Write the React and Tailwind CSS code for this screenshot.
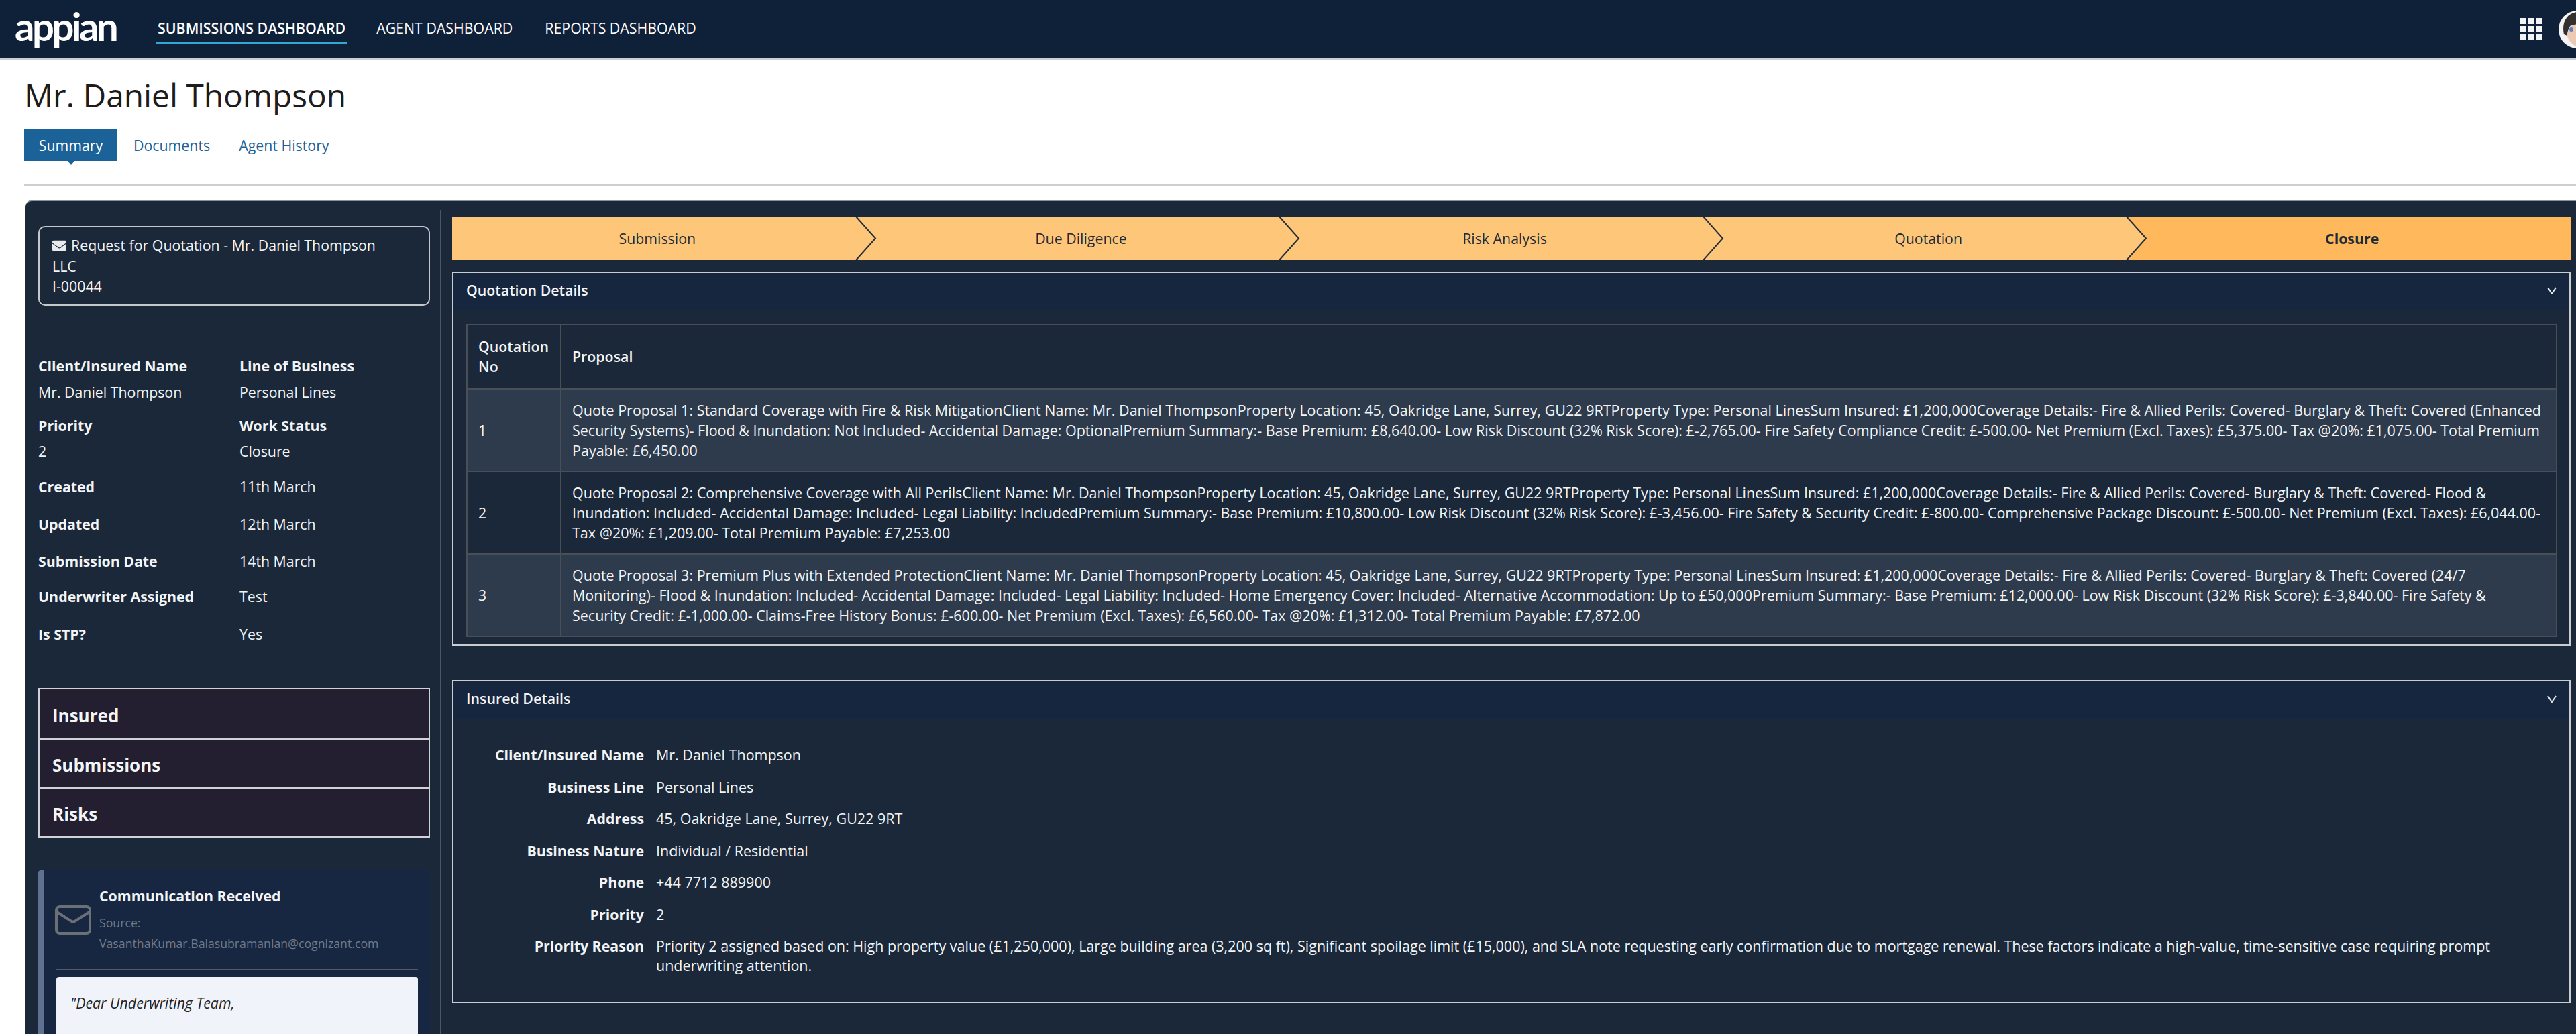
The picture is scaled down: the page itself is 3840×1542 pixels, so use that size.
import { Mail } from "lucide-react";
import { FaEnvelope } from "react-icons/fa";

const proposals = [
  "Quote Proposal 1: Standard Coverage with Fire & Risk MitigationClient Name: Mr. Daniel ThompsonProperty Location: 45, Oakridge Lane, Surrey, GU22 9RTProperty Type: Personal LinesSum Insured: £1,200,000Coverage Details:- Fire & Allied Perils: Covered- Burglary & Theft: Covered (Enhanced Security Systems)- Flood & Inundation: Not Included- Accidental Damage: OptionalPremium Summary:- Base Premium: £8,640.00- Low Risk Discount (32% Risk Score): £-2,765.00- Fire Safety Compliance Credit: £-500.00- Net Premium (Excl. Taxes): £5,375.00- Tax @20%: £1,075.00- Total Premium Payable: £6,450.00",
  "Quote Proposal 2: Comprehensive Coverage with All PerilsClient Name: Mr. Daniel ThompsonProperty Location: 45, Oakridge Lane, Surrey, GU22 9RTProperty Type: Personal LinesSum Insured: £1,200,000Coverage Details:- Fire & Allied Perils: Covered- Burglary & Theft: Covered- Flood & Inundation: Included- Accidental Damage: Included- Legal Liability: IncludedPremium Summary:- Base Premium: £10,800.00- Low Risk Discount (32% Risk Score): £-3,456.00- Fire Safety & Security Credit: £-800.00- Comprehensive Package Discount: £-500.00- Net Premium (Excl. Taxes): £6,044.00- Tax @20%: £1,209.00- Total Premium Payable: £7,253.00",
  "Quote Proposal 3: Premium Plus with Extended ProtectionClient Name: Mr. Daniel ThompsonProperty Location: 45, Oakridge Lane, Surrey, GU22 9RTProperty Type: Personal LinesSum Insured: £1,200,000Coverage Details:- Fire & Allied Perils: Covered- Burglary & Theft: Covered (24/7 Monitoring)- Flood & Inundation: Included- Accidental Damage: Included- Legal Liability: Included- Home Emergency Cover: Included- Alternative Accommodation: Up to £50,000Premium Summary:- Base Premium: £12,000.00- Low Risk Discount (32% Risk Score): £-3,840.00- Fire Safety & Security Credit: £-1,000.00- Claims-Free History Bonus: £-600.00- Net Premium (Excl. Taxes): £6,560.00- Tax @20%: £1,312.00- Total Premium Payable: £7,872.00",
];

const steps = ["Submission", "Due Diligence", "Risk Analysis", "Quotation", "Closure"];

const summaryRows = [
  ["Created", "11th March", "h-[56px]"],
  ["Updated", "12th March", "h-[55px]"],
  ["Submission Date", "14th March", "h-[53px]"],
  ["Underwriter Assigned", "Test", "h-[56px]"],
  ["Is STP?", "Yes", "h-[55px]"],
];

const insuredRows = [
  ["Client/Insured Name", "Mr. Daniel Thompson"],
  ["Business Line", "Personal Lines"],
  ["Address", "45, Oakridge Lane, Surrey, GU22 9RT"],
  ["Business Nature", "Individual / Residential"],
  ["Phone", "+44 7712 889900"],
  ["Priority", "2"],
  [
    "Priority Reason",
    "Priority 2 assigned based on: High property value (£1,250,000), Large building area (3,200 sq ft), Significant spoilage limit (£15,000), and SLA note requesting early confirmation due to mortgage renewal. These factors indicate a high-value, time-sensitive case requiring prompt underwriting attention.",
  ],
];

function PanelHeader({ title }) {
  return (
    <div className="h-[56px] px-[19px] pb-[4px] bg-[#17263f] flex items-center justify-between">
      <span className="text-[21.33px] font-semibold text-[#f2f4f6]">{title}</span>
      <svg width="14" height="11" viewBox="0 0 14 11" fill="none" stroke="#e6e9ee" strokeWidth="2">
        <path d="M1 1 L7 10 L13 1" />
      </svg>
    </div>
  );
}

function Avatar() {
  return (
    <svg width="58" height="58" viewBox="0 0 58 58" className="shrink-0 -mr-[31px]">
      <circle cx="29" cy="29" r="28" fill="#f4f4f4" />
      <path d="M9 36 C5 18 14 4 29 3 L58 3 L58 20 L24 22 C18 22 15 26 14 38 Z" fill="#33302f" />
      <path d="M14 38 C15 26 18 22 24 22 L58 20 L58 56 L32 56 C22 52 15 46 14 38 Z" fill="#ecc9b2" />
      <circle cx="20" cy="29" r="3" fill="#5b84c0" />
    </svg>
  );
}

export default function App() {
  return (
    <div className="w-[3840px] h-[1542px] overflow-hidden bg-white font-['Open_Sans',sans-serif]">
      {/* TOP NAV */}
      <header className="h-[89px] bg-[#0f2039] border-b-2 border-[#c9ced6] flex items-center justify-between pl-[22px]">
        <div className="flex items-center self-start">
          <span className="w-[150px] text-[58px] leading-none mt-[10px] font-bold tracking-[-3.5px] text-white font-['Lato',sans-serif]">
            appian
          </span>
          <nav className="ml-[61px] flex items-start text-[21.33px] text-white">
            <span className="h-[64px] px-[2px] pt-[24px] font-semibold border-b-[4px] border-[#35a7d4]">SUBMISSIONS DASHBOARD</span>
            <span className="ml-[44px] h-[64px] pt-[24px]">AGENT DASHBOARD</span>
            <span className="ml-[48px] h-[64px] pt-[24px]">REPORTS DASHBOARD</span>
          </nav>
        </div>
        <div className="flex items-center gap-[24px]">
          <div className="grid grid-cols-3 gap-[3px]">
            {Array.from({ length: 9 }).map((_, i) => (
              <div key={i} className="size-[9px] bg-[#f1f3f5]" />
            ))}
          </div>
          <Avatar />
        </div>
      </header>

      {/* PAGE TITLE + TABS */}
      <div className="pl-[36px]">
        <h1 className="pt-[22px] text-[47.8px] leading-[62px] text-[#1c1c1c]">Mr. Daniel Thompson</h1>
        <div className="mt-[20px] flex items-center h-[47px] text-[21.33px]">
          <span className="relative h-full w-[139px] bg-[#1b6299] text-white flex items-center justify-center">
            Summary
            <span className="absolute left-1/2 -translate-x-1/2 top-full border-x-[5px] border-t-[6px] border-x-transparent border-t-[#1b6299]" />
          </span>
          <span className="ml-[24px] text-[#1b6299]">Documents</span>
          <span className="ml-[43px] text-[#1b6299]">Agent History</span>
        </div>
        <div className="mt-[35px] h-[2px] bg-[#cfcfcf]" />
      </div>

      {/* MAIN CARD */}
      <div className="mt-[21px] ml-[38px] h-[1300px] bg-[#1a2839] border-t-2 border-[#8a929c] rounded-tl-[10px] flex text-[#f2f4f6] text-[21.33px]">
        {/* LEFT COLUMN */}
        <aside className="w-[618px] pl-[19px] shrink-0">
          <div className="mt-[37px] w-[584px] h-[119px] rounded-[10px] border-2 border-[#c4c8cd] pl-[19px] pt-[12px] leading-[30.5px]">
            <div className="flex items-center gap-[7px]">
              <FaEnvelope className="text-[21px] text-[#e8eaed]" />
              <span>Request for Quotation - Mr. Daniel Thompson</span>
            </div>
            <div>LLC</div>
            <div>I-00044</div>
          </div>

          <div className="mt-[75px] grid grid-cols-[300px_284px] leading-[30px]">
            <div className="h-[39px] font-bold">Client/Insured Name</div>
            <div className="h-[39px] font-bold">Line of Business</div>
            <div className="h-[50px]">Mr. Daniel Thompson</div>
            <div className="h-[50px]">Personal Lines</div>
            <div className="h-[38px] font-bold">Priority</div>
            <div className="h-[38px] font-bold">Work Status</div>
            <div className="h-[53px]">2</div>
            <div className="h-[53px]">Closure</div>
            {summaryRows.map(([label, value, h]) => (
              <div key={label} className="contents">
                <div className={`${h} font-bold`}>{label}</div>
                <div className={h}>{value}</div>
              </div>
            ))}
          </div>

          <div className="mt-[40px] w-[584px] border-2 border-[#cfd2d6] bg-[#231f30] text-[26px] font-bold">
            <div className="h-[76px] pl-[19px] pt-[20px] border-b-[4px] border-[#cfd2d6]">Insured</div>
            <div className="h-[73px] pl-[19px] pt-[18px] border-b-[4px] border-[#cfd2d6]">Submissions</div>
            <div className="h-[70px] pl-[19px] pt-[18px]">Risks</div>
          </div>

          {/* COMMUNICATION */}
          <div className="mt-[49px] w-[584px] h-[300px] bg-[#182741] border-l-[8px] border-[#5f7190] rounded-tl-[4px] pl-[19px] pr-[18px]">
            <div className="h-[149px] border-b-2 border-[#565a60] flex items-center">
              <Mail className="size-[60px] text-[#6b7076] -ml-[5px]" strokeWidth={1.6} />
              <div className="ml-[9px]">
                <div className="font-bold">Communication Received</div>
                <div className="mt-[10px] text-[17.7px] leading-[31px] text-[#6f7a8a]">
                  <div>Source:</div>
                  <div>VasanthaKumar.Balasubramanian@cognizant.com</div>
                </div>
              </div>
            </div>
            <div className="mt-[10px] h-[200px] bg-[#f0f3f9] rounded-[4px] pl-[21px] pt-[23px] italic text-[#222]">
              "Dear Underwriting Team,
            </div>
          </div>
        </aside>

        <div className="mt-[13px] w-[2px] h-[1287px] bg-[#4d5560] shrink-0" />

        {/* RIGHT COLUMN */}
        <main className="mt-[23px] ml-[16px] w-[3158px] shrink-0">
          {/* STAGES */}
          <div className="flex h-[65px] text-[#1f2a36]">
            {steps.map((step, i) => (
              <div
                key={step}
                className={`relative flex-1 flex items-center justify-center pr-[20px] ${
                  i === 4 ? "bg-[#ffb95c] font-bold" : "bg-[#fec678]"
                }`}
              >
                {step}
                {i < 4 && (
                  <svg width="32" height="65" viewBox="0 0 32 65" fill="none" stroke="#1f2d3d" strokeWidth="2" className="absolute -right-[1px] top-0 z-10">
                    {i === 3 && <path d="M1 0 L30 32.5 L1 65 L32 65 L32 0 Z" fill="#ffb95c" stroke="none" />}
                    <path d="M1 0 L30 32.5 L1 65" />
                  </svg>
                )}
              </div>
            ))}
          </div>

          {/* QUOTATION DETAILS */}
          <section className="mt-[17px] h-[558px] border-2 border-[#c9cdd2] bg-[#1a2839]">
            <PanelHeader title="Quotation Details" />
            <div className="px-[19px] pt-[20px]">
              <table className="w-[3117px] border-collapse table-fixed">
                <colgroup>
                  <col className="w-[140px]" />
                  <col />
                </colgroup>
                <thead>
                  <tr className="h-[96px] text-left">
                    <th className="border-2 border-[#4a4f57] pl-[16px] leading-[30px] font-semibold">Quotation No</th>
                    <th className="border-2 border-[#4a4f57] pl-[16px] font-semibold">Proposal</th>
                  </tr>
                </thead>
                <tbody>
                  {proposals.map((text, i) => (
                    <tr key={i} className={`h-[123px] ${i % 2 === 0 ? "bg-[#2e3b4c]" : ""}`}>
                      <td className="border-2 border-[#4a4f57] pl-[16px]">{i + 1}</td>
                      <td className="border-2 border-[#4a4f57] pl-[16px] pr-[19px] text-[21.5px] leading-[30px]">{text}</td>
                    </tr>
                  ))}
                </tbody>
              </table>
            </div>
          </section>

          {/* INSURED DETAILS */}
          <section className="mt-[51px] h-[482px] border-2 border-[#c9cdd2] bg-[#1a2839]">
            <PanelHeader title="Insured Details" />
            <div className="pt-[40px] flex flex-col gap-[19px]">
              {insuredRows.map(([label, value]) => (
                <div key={label} className="flex leading-[28.5px]">
                  <div className="w-[284px] shrink-0 text-right font-bold">{label}</div>
                  <div className="ml-[18px] w-[2820px] text-[21.5px]">{value}</div>
                </div>
              ))}
            </div>
          </section>
        </main>
      </div>
    </div>
  );
}
